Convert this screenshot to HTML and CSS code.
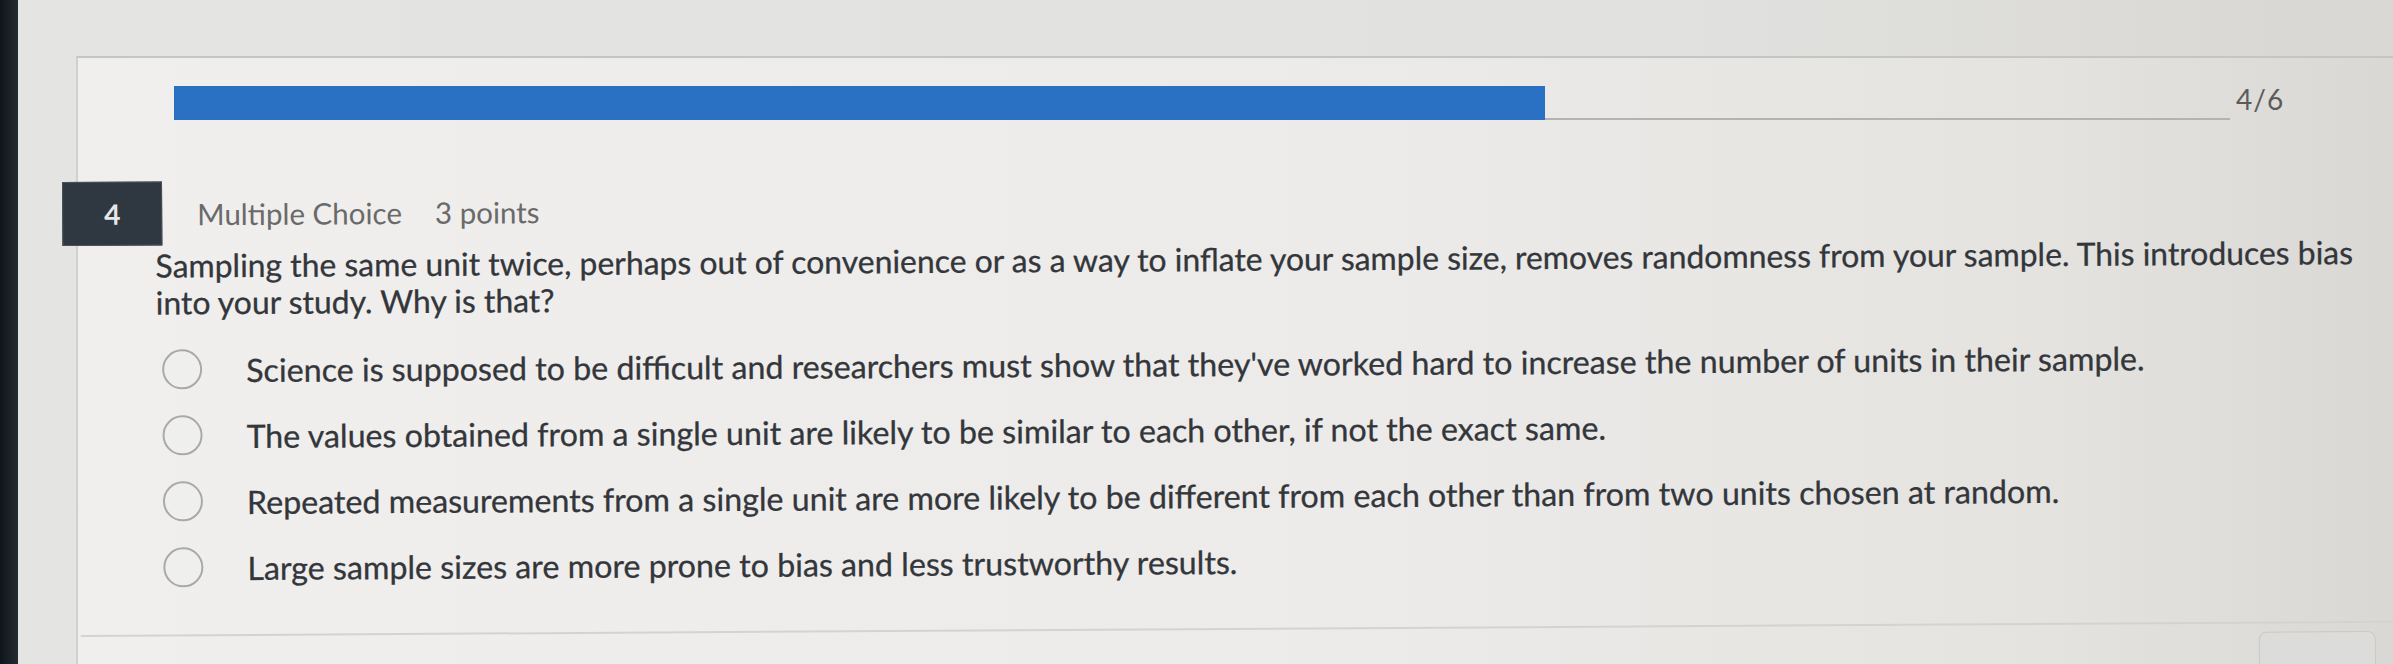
FILE: index.html
```html
<!DOCTYPE html>
<html lang="en">
<head>
<meta charset="utf-8">
<title>Quiz question 4</title>
<link rel="stylesheet" href="styles.css">
</head>
<body>
<div class="screen">
  <div class="bezel"></div>
  <main class="page">
    <section class="card">
      <div class="progress-row">
        <div class="track"><div class="fill" style="width: 66.67%"></div></div>
        <span class="progress-label">4/6</span>
      </div>

      <div class="question-body">
        <div class="question-head">
          <div class="qnum">4</div>
          <span class="qtype">Multiple Choice</span>
          <span class="qpoints">3 points</span>
        </div>

        <p class="prompt">Sampling the same unit twice, perhaps out of convenience or as a way to inflate your sample size, removes randomness from your sample. This introduces bias into your study. Why is that?</p>

        <ul class="choices">
          <li class="choice"><span class="radio"></span><span class="choice-text">Science is supposed to be difficult and researchers must show that they've worked hard to increase the number of units in their sample.</span></li>
          <li class="choice"><span class="radio"></span><span class="choice-text">The values obtained from a single unit are likely to be similar to each other, if not the exact same.</span></li>
          <li class="choice"><span class="radio"></span><span class="choice-text">Repeated measurements from a single unit are more likely to be different from each other than from two units chosen at random.</span></li>
          <li class="choice"><span class="radio"></span><span class="choice-text">Large sample sizes are more prone to bias and less trustworthy results.</span></li>
        </ul>

        <div class="divider"></div>

        <div class="footer">
          <button class="next-btn" type="button">Next</button>
        </div>
      </div>
    </section>
  </main>
</div>
</body>
</html>
```

FILE: styles.css
```css
html, body {
  margin: 0;
  padding: 0;
  height: 100%;
  overflow: hidden;
}

body {
  background: #e1e1df;
  font-family: "Lato", "Liberation Sans", sans-serif;
  color: #33363b;
}

.screen {
  display: flex;
  height: 664px;
  width: 2393px;
  overflow: hidden;
}

.bezel {
  flex: 0 0 18px;
  background: linear-gradient(to right, #0f151b, #232b33);
}

.page {
  flex: 1;
  padding-top: 56px;
  background: linear-gradient(to right, #e4e4e2 0%, #e1e1df 70%, #d8d7d3 100%);
}

.card {
  margin-left: 58px;
  height: 100%;
  border-top: 2px solid #c5c5c3;
  border-left: 2px solid #d0d0ce;
  background: linear-gradient(to right, #f0efed 0%, #ecebe9 55%, #e4e3e0 85%, #d9d8d4 100%);
}

.progress-row {
  display: flex;
  align-items: flex-start;
  padding: 28px 0 0 96px;
}

.track {
  width: 2056px;
  height: 32px;
  border-bottom: 2px solid #b3b3b1;
}

.fill {
  height: 34px;
  background: #2b71c3;
}

.progress-label {
  margin: -4px 0 0 6px;
  font-size: 28px;
  color: #5b5b5b;
  line-height: 34px;
  letter-spacing: 1px;
}

.question-body {
  transform: rotate(-0.35deg);
  transform-origin: 0 0;
}

.question-head {
  display: flex;
  align-items: center;
  margin: 62px 0 0 -16px;
}

.qnum {
  width: 100px;
  height: 64px;
  background: #2f3841;
  color: #e6e7e8;
  font-weight: 700;
  font-size: 28px;
  display: flex;
  align-items: center;
  justify-content: center;
  box-sizing: border-box;
  border: 1px solid #4a535c;
}

.qtype {
  margin-left: 35px;
  font-size: 29.5px;
  color: #6a6a6a;
}

.qpoints {
  margin-left: 33px;
  font-size: 29.5px;
  color: #6a6a6a;
}

.prompt {
  margin: 2px 6px 0 77px;
  font-size: 31.9px;
  line-height: 37px;
  color: #33363b;
  -webkit-text-stroke: 0.3px #33363b;
}

.choices {
  list-style: none;
  margin: 15px 0 0 83px;
  padding: 0;
}

.choice {
  display: flex;
  align-items: center;
  height: 66px;
}

.radio {
  flex: 0 0 auto;
  width: 40px;
  height: 40px;
  box-sizing: border-box;
  border: 2px solid #a9a9a9;
  border-radius: 50%;
  background: #efefed;
}

.choice-text {
  margin-left: 44px;
  font-size: 32.2px;
  color: #33363b;
  -webkit-text-stroke: 0.3px #33363b;
}

.divider {
  margin-top: 34px;
  border-top: 2px solid #d3d3d1;
}

.footer {
  display: flex;
  justify-content: flex-end;
  padding: 8px 20px 0 0;
}

.next-btn {
  width: 117px;
  height: 60px;
  border: 1px solid #c9c9c7;
  border-radius: 8px;
  background: #dcdcda;
  font-family: "Lato", "Liberation Sans", sans-serif;
  font-size: 26px;
  color: #3b3e43;
  padding: 24px 0 0;
}
```
